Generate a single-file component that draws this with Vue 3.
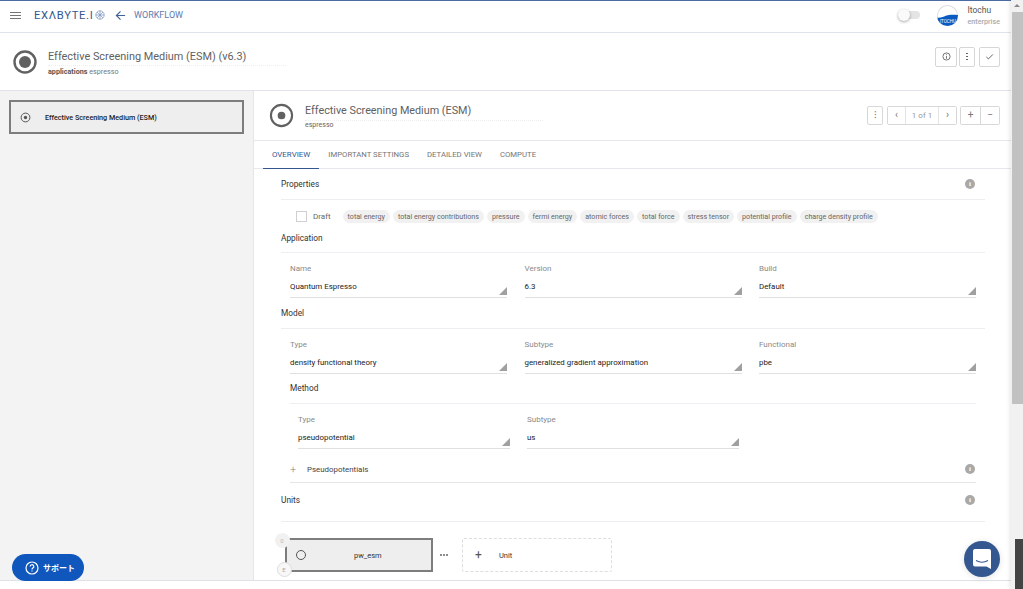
<template>
  <div class="page">
    <div class="main">
      <header class="topbar">
        <div class="burger"><span></span><span></span><span></span></div>
        <div class="logo">EXΛBYTE.I<svg width="10" height="10" viewBox="0 0 12 12" fill="none" stroke="#7d95bd" stroke-width="0.9"><circle cx="6" cy="6" r="5"/><path d="M1 6h10M6 1v10M2.500 2.500l7 7M9.500 2.500l-7 7"/></svg></div>
        <svg class="back" width="11" height="11" viewBox="0 0 12 12" fill="none" stroke="#3f6399" stroke-width="1.3"><path d="M11 6H1.500M6 1.500L1.500 6 6 10.500"/></svg>
        <span class="crumb">WORKFLOW</span>
        <div class="spacer"></div>
        <div class="toggle"><i></i></div>
        <div class="avatar">
          <svg width="21" height="21" viewBox="0 0 21 21"><path d="M0 12.500c5 1 8-2 12-2.500 4-.5 6 0 9 0v11H0z" fill="#0b5bc0"/></svg>
          <span>ITOCHU</span>
        </div>
        <div class="user"><b>Itochu</b><small>enterprise</small></div>
      </header>

      <section class="titlebar">
        <svg width="26" height="26" viewBox="0 0 26 26"><circle cx="13" cy="13" r="10.500" fill="none" stroke="#616161" stroke-width="2.400"/><circle cx="13" cy="13" r="6" fill="#616161"/></svg>
        <div class="title-text">
          <h1>Effective Screening Medium (ESM) (v6.3)</h1>
          <p><b>applications</b> espresso</p>
        </div>
        <div class="spacer"></div>
        <div class="tools">
          <button class="tool info-btn"><svg width="9" height="9" viewBox="0 0 10 10" fill="none" stroke="#666"><circle cx="5" cy="5" r="4"/><path d="M5 4.500v3M5 2.500v1"/></svg></button>
          <button class="tool"><span class="dots"></span></button>
          <button class="tool check-btn"><svg width="9" height="9" viewBox="0 0 10 10" fill="none" stroke="#666" stroke-width="1.100"><path d="M1.500 5.500l2.300 2.200 5-5"/></svg></button>
        </div>
      </section>

      <div class="body">
        <aside class="side">
          <div class="side-item">
            <svg width="11" height="11" viewBox="0 0 11 11"><circle cx="5.500" cy="5.500" r="4.400" fill="none" stroke="#555"/><circle cx="5.500" cy="5.500" r="1.700" fill="#555"/></svg>
            <span>Effective Screening Medium (ESM)</span>
          </div>
        </aside>

        <main class="panel">
          <div class="panel-head">
            <svg width="25" height="25" viewBox="0 0 26 26"><circle cx="13" cy="13" r="11" fill="none" stroke="#616161" stroke-width="2.200"/><circle cx="13" cy="13" r="4" fill="#616161"/></svg>
            <div class="panel-title">
              <h2>Effective Screening Medium (ESM)</h2>
              <p>espresso</p>
            </div>
            <div class="spacer"></div>
            <div class="pager">
              <button class="pg single">⁝</button>
              <div class="pg-group">
                <button class="pg">‹</button><span class="pg-count">1 of 1</span><button class="pg">›</button>
              </div>
              <div class="pg-group pg-edit">
                <button class="pg">+</button><button class="pg">−</button>
              </div>
            </div>
          </div>

          <nav class="tabs">
            <a v-for="(t, i) in tabs" :key="t" :class="{ active: i === 0 }">{{ t }}</a>
          </nav>

          <div class="content">
            <div class="sec sec-props">
              <span>Properties</span><i class="info">i</i>
            </div>
            <div class="props">
              <span class="check"></span>
              <span class="draft">Draft</span>
              <span v-for="c in chips" :key="c" class="chip">{{ c }}</span>
            </div>

            <div class="sec sec-app"><span>Application</span></div>
            <div class="fields">
              <div v-for="f in appFields" :key="f.label" class="field">
                <label>{{ f.label }}</label>
                <div class="value">{{ f.value }}</div>
              </div>
            </div>

            <div class="sec sec-model"><span>Model</span></div>
            <div class="fields">
              <div v-for="f in modelFields" :key="f.label" class="field">
                <label>{{ f.label }}</label>
                <div class="value">{{ f.value }}</div>
              </div>
            </div>

            <div class="method">
              <div class="sec sec-method"><span>Method</span></div>
              <div class="fields method-fields">
                <div v-for="f in methodFields" :key="f.label" class="field">
                  <label>{{ f.label }}</label>
                  <div class="value">{{ f.value }}</div>
                </div>
              </div>
              <div class="pseudo">
                <span class="plus">+</span><span>Pseudopotentials</span><i class="info">i</i>
              </div>
            </div>

            <div class="sec sec-units"><span>Units</span><i class="info">i</i></div>
            <div class="units">
              <div class="unit">
                <span class="badge top">0</span>
                <span class="badge bottom">E</span>
                <span class="ring"></span>
                <span class="unit-name">pw_esm</span>
              </div>
              <span class="more"><i></i><i></i><i></i></span>
              <div class="add"><span class="add-plus">+</span><span>Unit</span></div>
            </div>
          </div>
        </main>
      </div>
      <div class="foot"></div>
    </div>

    <div class="scrollbar">
      <div class="arrow"></div>
      <div class="thumb"></div>
      <div class="dark"></div>
    </div>

    <button class="support">
      <svg width="14" height="14" viewBox="0 0 14 14" fill="none" stroke="#fff" stroke-width="1.200"><circle cx="7" cy="7" r="6"/><path d="M5.200 5.600a1.800 1.800 0 1 1 2.700 1.500c-.6.400-.9.700-.9 1.300M7 9.600v1"/></svg>
      <span>サポート</span>
    </button>
    <div class="chat">
      <svg width="18" height="20" viewBox="0 0 18 20"><path d="M2 0h14a2 2 0 0 1 2 2v18l-4.500-2.600H2a2 2 0 0 1-2-2V2a2 2 0 0 1 2-2z" fill="#fff"/><path d="M3 11.500c3.500 2 8.500 2 12 0" fill="none" stroke="#34578f" stroke-width="1.100"/></svg>
    </div>
  </div>
</template>

<script setup>
const tabs = ['OVERVIEW', 'IMPORTANT SETTINGS', 'DETAILED VIEW', 'COMPUTE']
const chips = [
  'total energy',
  'total energy contributions',
  'pressure',
  'fermi energy',
  'atomic forces',
  'total force',
  'stress tensor',
  'potential profile',
  'charge density profile'
]
const appFields = [
  { label: 'Name', value: 'Quantum Espresso' },
  { label: 'Version', value: '6.3' },
  { label: 'Build', value: 'Default' }
]
const modelFields = [
  { label: 'Type', value: 'density functional theory' },
  { label: 'Subtype', value: 'generalized gradient approximation' },
  { label: 'Functional', value: 'pbe' }
]
const methodFields = [
  { label: 'Type', value: 'pseudopotential' },
  { label: 'Subtype', value: 'us' }
]
</script>

<style>
html, body { margin: 0; overflow: hidden; }
</style>

<style scoped>
.page {
  position: relative;
  display: flex;
  width: 1023px;
  height: 589px;
  overflow: hidden;
  background: #fff;
  font-family: Roboto, "Liberation Sans", "Noto Sans CJK JP", sans-serif;
  color: #333;
}
.main { flex: 1; min-width: 0; display: flex; flex-direction: column; }
.spacer { flex: 1; }
button { font-family: inherit; background: #fff; padding: 0; }

.topbar {
  height: 33px;
  box-sizing: border-box;
  flex: none;
  display: flex;
  align-items: center;
  border-top: 1px solid #4a6ca3;
  border-bottom: 1px solid #dfe3ec;
  padding: 0 11px 3px 10px;
}
.burger { width: 11px; display: flex; flex-direction: column; gap: 2px; }
.burger span { height: 1px; background: #757575; }
.logo {
  margin-left: 13px;
  font-size: 11.200px;
  letter-spacing: 0.700px;
  color: #34578f;
  display: flex;
  align-items: center;
  gap: 1px;
  width: 81px;
}
.crumb { margin-left: 8px; font-size: 9px; color: #5d7bb0; }
.toggle { position: relative; width: 22px; height: 8px; border-radius: 4px; background: #e4e4e4; margin-right: 17px; }
.toggle i {
  position: absolute;
  left: 0;
  top: -2px;
  width: 12px;
  height: 12px;
  border-radius: 50%;
  background: #fafafa;
  box-shadow: 0 1px 3px rgba(0, 0, 0, 0.35);
}
.avatar {
  position: relative;
  width: 21px;
  height: 21px;
  border-radius: 50%;
  box-shadow: inset 0 0 0 1px #ddd;
  overflow: hidden;
  background: #fff;
}
.avatar svg { display: block; }
.avatar span {
  position: absolute;
  left: 0;
  right: 0;
  bottom: 2px;
  text-align: center;
  font-size: 4.500px;
  color: #fff;
}
.user { margin-left: 9px; display: flex; flex-direction: column; gap: 2px; }
.user b { font-weight: 400; font-size: 8.500px; color: #555; }
.user small { font-size: 7.200px; color: #aaa; font-weight: 500; }

.titlebar {
  height: 58px;
  flex: none;
  box-sizing: border-box;
  display: flex;
  align-items: center;
  padding: 0 11px 0 12px;
  border-bottom: 1px solid #e0e3ea;
}
.title-text { margin-left: 10px; padding-top: 1px; }
.title-text h1 {
  margin: 0;
  width: 238px;
  height: 16px;
  font-size: 10.900px;
  font-weight: 400;
  line-height: 16px;
  color: #616161;
  white-space: nowrap;
  border-bottom: 1px dotted #eee;
}
.title-text p { margin: 1px 0 0; font-size: 7.200px; color: #777; }
.title-text p b { color: #555; font-weight: 700; }
.tools { display: flex; gap: 2px; margin-top: -10px; }
.tool {
  width: 16px;
  height: 20px;
  border: 1px solid #d6d6d6;
  border-radius: 2px;
  display: flex;
  align-items: center;
  justify-content: center;
}
.info-btn { width: 22px; }
.check-btn { width: 21px; margin-left: 2px; }
.dots { width: 1.500px; height: 1.500px; background: #666; box-shadow: 0 -3px 0 #666, 0 3px 0 #666; }

.body { flex: 1; min-height: 0; display: flex; }
.side {
  width: 254px;
  flex: none;
  box-sizing: border-box;
  background: #f3f3f3;
  border-right: 1px solid #e6e6e6;
  padding: 9px 9px 0 9px;
}
.side-item {
  height: 34px;
  box-sizing: border-box;
  width: 235px;
  border: 2.500px solid #7d7d7d;
  background: #eee;
  display: flex;
  align-items: center;
  padding-left: 9px;
  font-size: 7.200px;
  font-weight: 500;
  color: #222;
}
.side-item span { margin-left: 14px; }

.panel { flex: 1; min-width: 0; }
.panel-head {
  height: 50px;
  box-sizing: border-box;
  display: flex;
  align-items: center;
  padding: 0 11px 0 15px;
  border-bottom: 1px solid #e5e8ee;
}
.panel-title { margin-left: 11px; }
.panel-title h2 {
  margin: 0;
  width: 238px;
  height: 17px;
  font-size: 10.800px;
  line-height: 15px;
  font-weight: 400;
  color: #616161;
  border-bottom: 1px dotted #eee;
  white-space: nowrap;
}
.panel-title p { margin: 0; font-size: 7px; color: #666; }
.pager { display: flex; gap: 4px; margin-top: -1px; }
.pg-group { display: flex; border: 1px solid #d8d8d8; border-radius: 2px; height: 17px; }
.pg {
  width: 17px;
  height: 17px;
  border: 0;
  color: #777;
  font-size: 10px;
  line-height: 14px;
}
.pg-group .pg + .pg { border-left: 1px solid #d8d8d8; }
.pg-edit { margin-left: -1px; }
.pg-edit .pg { width: 19px; }
.pg.single { width: 16px; height: 19px; border: 1px solid #d8d8d8; border-radius: 2px; }
.pg-count {
  width: 34px;
  text-align: center;
  font-size: 8px;
  line-height: 17px;
  color: #999;
  border-left: 1px solid #e4e4e4;
  border-right: 1px solid #e4e4e4;
  box-sizing: border-box;
}

.tabs {
  height: 28px;
  display: flex;
  box-sizing: border-box;
  border-bottom: 1px solid #e6e8ee;
  padding-left: 9px;
}
.tabs a {
  height: 28px;
  box-sizing: border-box;
  padding: 9px 9px 0;
  font-size: 7.750px;
  color: #757575;
}
.tabs a.active { color: #34578f; border-bottom: 1px solid #34578f; font-size: 7.900px; }

.content { padding: 0 26px 0 27px; font-size: 8px; }
.sec {
  position: relative;
  display: flex;
  justify-content: space-between;
  color: #333;
  font-size: 8.300px;
  line-height: 10px;
  border-bottom: 1px solid #eceef1;
  box-sizing: border-box;
}
.sec-props { height: 31px; padding-top: 10px; }
.sec-app { height: 21px; padding-top: 1px; }
.sec-model { height: 21px; margin-top: 10px; }
.sec-units { height: 39px; padding-top: 12px; }
.info {
  width: 10px;
  height: 10px;
  border-radius: 50%;
  background: #a9a9a9;
  color: #fff;
  font: 700 7px/10px "Liberation Serif", serif;
  text-align: center;
  margin-right: 10px;
}
.props {
  height: 32px;
  display: flex;
  align-items: center;
  padding: 0 0 0 15px;
}
.check { width: 9px; height: 9px; border: 1px solid #d0d0d0; }
.draft { margin: 0 12px 0 6px; color: #666; font-size: 8px; }
.chip {
  height: 13px;
  line-height: 13px;
  padding: 0 5px;
  margin-right: 3px;
  border-radius: 7px;
  background: #f1f1f1;
  color: #666;
  font-size: 7.150px;
  white-space: nowrap;
}
.fields {
  display: grid;
  grid-template-columns: repeat(3, 217px);
  column-gap: 17.500px;
  padding-left: 9px;
  padding-top: 11px;
}
.field label { display: block; font-size: 8px; line-height: 10px; color: #8a8a8a; }
.value {
  position: relative;
  margin-top: 8px;
  height: 15px;
  font-size: 7.900px;
  line-height: 10px;
  color: #222;
  border-bottom: 1px solid #e0e0e0;
}
.value::after {
  content: '';
  position: absolute;
  right: 0;
  bottom: 2px;
  border-style: solid;
  border-width: 0 0 8px 8px;
  border-color: transparent transparent #a0a0a0 transparent;
}
.method { margin-left: 9px; width: 686px; }
.sec-method { height: 21px; margin-top: 9px; }
.method-fields {
  grid-template-columns: repeat(2, 212px);
  column-gap: 17px;
  padding-left: 8px;
}
.pseudo {
  position: relative;
  display: flex;
  align-items: center;
  height: 34px;
  box-sizing: border-box;
  padding-top: 7px;
  border-bottom: 1px solid #e6e6e6;
  font-size: 7.900px;
  color: #444;
}
.plus { width: 17px; color: #888; font-size: 11px; font-weight: 300; }
.pseudo .info { position: absolute; right: 1px; margin-right: 0; }

.units { display: flex; align-items: center; margin-top: 16px; margin-left: 4px; }
.unit {
  position: relative;
  width: 148px;
  height: 34px;
  box-sizing: border-box;
  border: 2.500px solid #7d7d7d;
  background: #eee;
  display: flex;
  align-items: center;
  font-size: 7.500px;
  color: #333;
}
.ring { width: 8px; height: 8px; border: 1px solid #555; border-radius: 50%; margin-left: 9px; }
.unit-name { position: absolute; left: 67px; }
.badge {
  position: absolute;
  left: -12.500px;
  width: 15px;
  height: 15px;
  border-radius: 50%;
  background: #f1f1f1;
  color: #bbb;
  text-align: center;
  font-size: 6px;
  line-height: 15px;
}
.badge.top { top: -7.500px; }
.badge.bottom {
  top: 21.500px;
  left: -10.500px;
  width: 13px;
  height: 13px;
  line-height: 13px;
  border: 1px solid #ddd;
  background: #f7f7f7;
  color: #aaa;
}
.more { margin-left: 7px; width: 22px; display: flex; gap: 1px; }
.more i { width: 2px; height: 2px; border-radius: 50%; background: #666; }
.add {
  width: 150px;
  height: 34px;
  box-sizing: border-box;
  border: 1px dashed #ddd;
  border-radius: 2px;
  display: flex;
  align-items: center;
  padding-left: 12px;
  color: #333;
  font-size: 7.500px;
}
.add-plus { width: 24px; font-size: 12px; color: #555; }

.foot { height: 8px; flex: none; background: #fff; border-top: 1px solid #dfe1e8; }

.scrollbar {
  width: 12px;
  flex: none;
  position: relative;
  background: #f1f1f1;
  box-shadow: -2px 0 3px rgba(0, 0, 0, 0.08);
}
.arrow {
  width: 0;
  margin: 4px auto 0;
  border: 3px solid transparent;
  border-top: 0;
  border-bottom: 3px solid #888;
}
.thumb { position: absolute; left: 1px; right: 0; top: 12px; height: 392px; background: #c1c1c1; }
.dark { position: absolute; left: 4px; right: 0; top: 539px; bottom: 0; background: #444; }

.support {
  position: absolute;
  left: 12px;
  top: 554px;
  width: 72px;
  height: 27px;
  border: 0;
  border-radius: 14px;
  background: #0f57bd;
  color: #fff;
  display: flex;
  align-items: center;
  gap: 4px;
  padding-left: 13px;
  font-size: 8px;
  font-weight: 700;
}
.chat {
  position: absolute;
  left: 964px;
  top: 541px;
  width: 36px;
  height: 36px;
  border-radius: 50%;
  background: #34578f;
  display: flex;
  align-items: center;
  justify-content: center;
  box-shadow: 0 1px 6px rgba(0, 0, 0, 0.12);
}
</style>
